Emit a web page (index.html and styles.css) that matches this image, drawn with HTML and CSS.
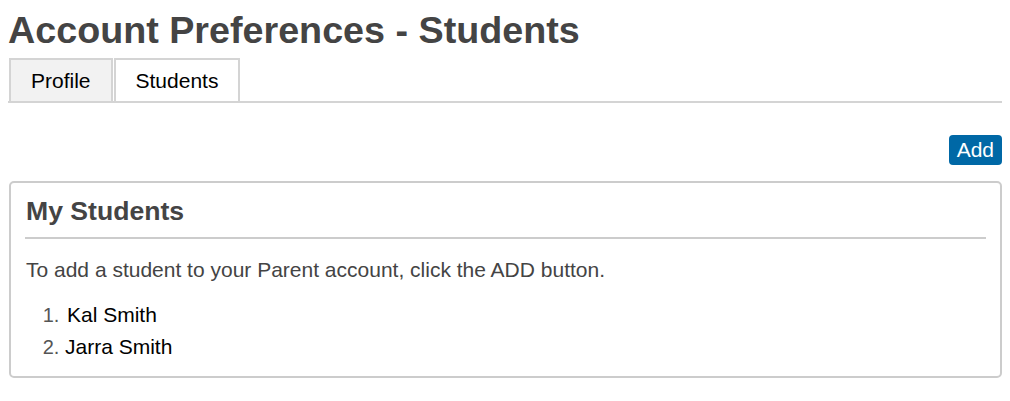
FILE: index.html
```html
<!DOCTYPE html>
<html lang="en">
<head>
    <meta charset="UTF-8">
    <meta name="viewport" content="width=device-width, initial-scale=1.0">
    <title>Account Preferences - Students</title>
    <link rel="stylesheet" href="styles.css">
</head>
<body>

<header>
    <h1>Account Preferences - Students</h1>
    <ul class="tabs">
        <li class="tab">Profile</li>
        <li class="tab active">Students</li>
    </ul>
</header>

<div class="toolbar">
    <button type="button" class="add-button">Add</button>
</div>

<section class="panel">
    <h2>My Students</h2>
    <hr>
    <p>To add a student to your Parent account, click the ADD button.</p>
    <ol class="student-list">
        <li><span class="first">Kal Smith</span></li>
        <li><span>Jarra Smith</span></li>
    </ol>
</section>

</body>
</html>
```

FILE: styles.css
```css
body {
    margin: 8px;
    font-family: "Liberation Sans", Arial, sans-serif;
    font-size: 21px;
    color: #444;
    background-color: #fff;
}
h1 {
    margin: 0;
    font-size: 37.7px;
    line-height: 44px;
    font-weight: bold;
    color: #444;
}
.tabs {
    list-style-type: none;
    display: flex;
    gap: 1px;
    margin: 6px 0 0 0;
    padding: 0 0 0 1px;
    border-bottom: 2px solid #d4d4d4;
}
.tab {
    padding: 9px 20px 8px 20px;
    line-height: 24px;
    color: #000;
    background-color: #f2f2f2;
    border: 2px solid #d4d4d4;
    border-bottom: none;
}
.tab.active {
    background-color: #fff;
}
.toolbar {
    display: flex;
    justify-content: flex-end;
    margin-top: 32px;
}
.add-button {
    font-family: inherit;
    font-size: 21px;
    line-height: 24px;
    padding: 3px 8px;
    color: #fff;
    background-color: #0068a6;
    border: none;
    border-radius: 4px;
    cursor: pointer;
}
.panel {
    margin: 16px 0 0 1px;
    padding: 13px 14px 13px 14px;
    border: 2px solid #ccc;
    border-radius: 5px;
}
.panel h2 {
    margin: 0 0 0 1px;
    font-size: 26.6px;
    line-height: 30px;
    color: #444;
}
.panel hr {
    margin: 11px 0 0 0;
    border: none;
    border-top: 2px solid #ccc;
}
.panel p {
    margin: 19px 0 0 1px;
    line-height: 24px;
}
.student-list {
    margin: 17px 0 0 0;
    padding-left: 40px;
}
.student-list li {
    line-height: 32px;
}
.student-list li::marker {
    font-size: 20px;
    color: #555;
}
.student-list span {
    color: #000;
}
.student-list .first {
    margin-left: 2px;
}
```
